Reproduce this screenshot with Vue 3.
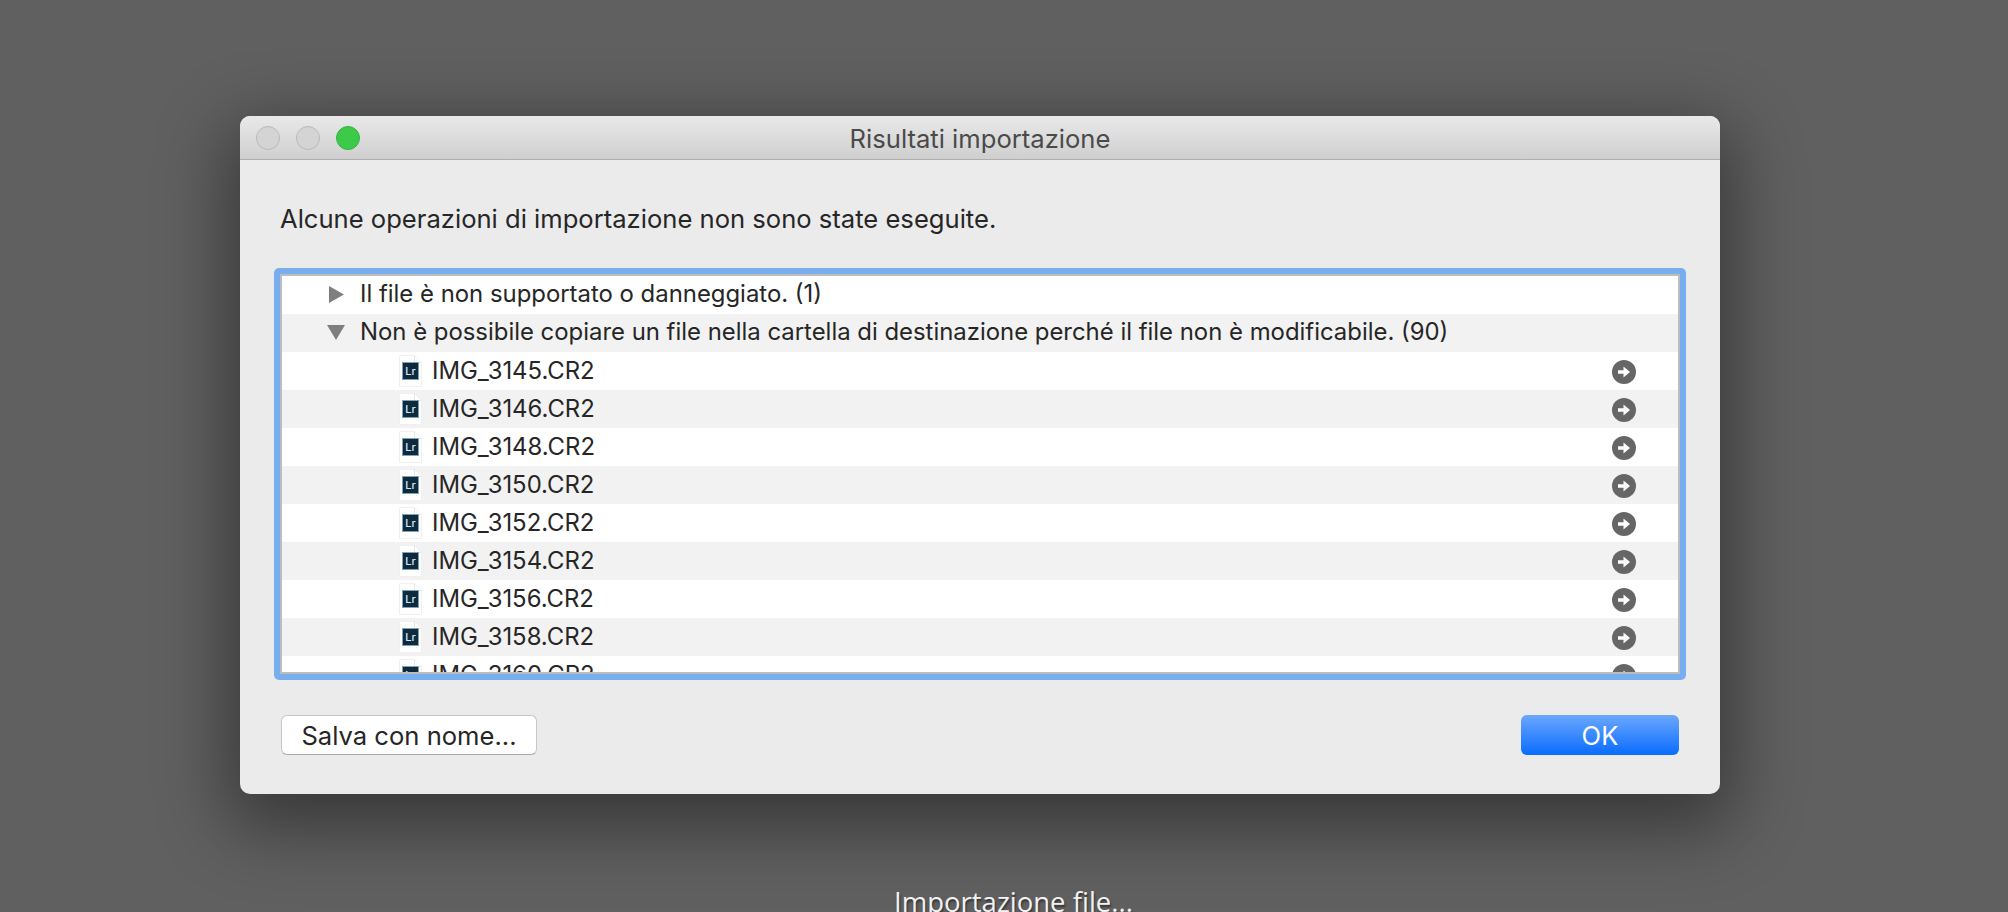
<script setup>
const files = ['3145','3146','3148','3150','3152','3154','3156','3158','3160'].map(n => `IMG_${n}.CR2`)
</script>

<template>
  <div class="stage">
    <section class="window">
      <header class="titlebar">
        <div class="lights">
          <span class="light"></span>
          <span class="light"></span>
          <span class="light green"></span>
        </div>
        <h1 class="title">Risultati importazione</h1>
      </header>
      <div class="content">
        <p class="message">Alcune operazioni di importazione non sono state eseguite.</p>
        <div class="ring">
          <div class="list">
            <div class="row">
              <svg class="tri right" width="15" height="17" viewBox="0 0 15 17"><path d="M0 0 15 8.500 0 17z" fill="#7f7f7f"/></svg>
              <span class="text">Il file è non supportato o danneggiato. (1)</span>
            </div>
            <div class="row alt">
              <svg class="tri down" width="18" height="15" viewBox="0 0 18 15"><path d="M0 0h18L9 15z" fill="#7f7f7f"/></svg>
              <span class="text">Non è possibile copiare un file nella cartella di destinazione perché il file non è modificabile. (90)</span>
            </div>
            <div v-for="(f, i) in files" :key="f" class="row file" :class="{ alt: i % 2 === 1 }">
              <span class="doc">
                <svg class="sheet" width="23" height="32" viewBox="0 0 23 32"><path d="M0.500 0.500h15l7 7v24H0.500z" fill="#fff" stroke="#f0f0f0"/><path d="M15.500 0.500v7h7" fill="none" stroke="#e4e4e4"/></svg>
                <span class="lr">Lr</span>
              </span>
              <span class="name">{{ f }}</span>
              <svg class="go" width="24" height="24" viewBox="0 0 24 24">
                <circle cx="12" cy="12" r="12" fill="#666"/>
                <path d="M6 10.300h5.500V6.500L18 12l-6.500 5.500v-3.800H6z" fill="#fff"/>
              </svg>
            </div>
          </div>
        </div>
        <div class="actions">
          <button class="btn">Salva con nome...</button>
          <button class="btn primary">OK</button>
        </div>
      </div>
    </section>
    <p class="status">Importazione file...</p>
  </div>
</template>

<style>
html, body { margin: 0; background: #606060; overflow: hidden; }
</style>

<style scoped>
.stage {
  width: 2008px;
  height: 912px;
  overflow: hidden;
  background: #606060;
  padding-top: 116px;
  box-sizing: border-box;
  font-family: Inter, "Liberation Sans", sans-serif;
}
.window {
  width: 1480px;
  height: 678px;
  margin-left: 240px;
  border-radius: 10px;
  background: #ebebeb;
  box-shadow: 0 22px 70px 12px rgba(0, 0, 0, 0.42);
  overflow: hidden;
  display: flex;
  flex-direction: column;
}
.titlebar {
  position: relative;
  height: 44px;
  box-sizing: border-box;
  flex: none;
  display: flex;
  align-items: center;
  justify-content: center;
  background: linear-gradient(#e9e9e9, #cfcfcf);
  border-bottom: 1px solid #adadad;
}
.lights {
  position: absolute;
  left: 16px;
  top: 10px;
  display: flex;
  gap: 16px;
}
.light {
  width: 24px;
  height: 24px;
  box-sizing: border-box;
  border-radius: 50%;
  background: #d4d4d4;
  border: 1px solid #b9b9b9;
}
.light.green { background: #3dc94a; border-color: #35b441; }
.title {
  margin: 2px 0 0;
  font-size: 25.6px;
  font-weight: 400;
  color: #4a4a4a;
}
.content {
  flex: 1;
  padding: 0 34px;
  display: flex;
  flex-direction: column;
}
.message {
  margin: 0;
  height: 108px;
  padding: 44px 0 0 6px;
  box-sizing: border-box;
  font-size: 25.6px;
  line-height: 30px;
  color: #262626;
}
.ring {
  width: 1412px;
  height: 412px;
  flex: none;
  box-sizing: border-box;
  border: 6px solid #78aeee;
  border-radius: 5px;
}
.list {
  height: 400px;
  box-sizing: border-box;
  border: 2px solid #bdbdbd;
  background: #fff;
  overflow: hidden;
}
.row {
  position: relative;
  height: 38px;
  display: flex;
  align-items: center;
  background: #fff;
  font-size: 23.9px;
  line-height: 34px;
  color: #262626;
  box-sizing: border-box;
}
.row.alt { background: #f2f2f2; }
.tri { position: absolute; }
.tri.right { left: 47px; top: 10px; }
.tri.down { left: 45px; top: 11px; }
.text { padding-left: 78px; white-space: nowrap; position: relative; top: -1px; }
.doc {
  position: relative;
  width: 23px;
  height: 32px;
  margin-left: 117px;
  flex: none;
}
.sheet { display: block; }
.lr {
  position: absolute;
  left: 4px;
  top: 8px;
  width: 15px;
  height: 16px;
  background: #0f2a3d;
  box-shadow: 0 0 0 1px #7fa3ba;
  color: #d3e9f7;
  font-size: 11px;
  font-weight: 500;
  line-height: 16px;
  text-align: center;
}
.name { margin-left: 10px; white-space: nowrap; }
.go { margin-left: auto; margin-right: 42px; flex: none; position: relative; top: 1px; }
.actions {
  display: flex;
  justify-content: space-between;
  padding: 35px 7px 0 7px;
}
.btn {
  height: 40px;
  box-sizing: border-box;
  border: 1px solid #c6c6c6;
  border-bottom-color: #a8a8a8;
  border-radius: 6px;
  background: #fff;
  color: #262626;
  font: 400 25.6px Inter, "Liberation Sans", sans-serif;
  width: 256px;
  padding: 0;
}
.btn.primary {
  width: 158px;
  border: none;
  background: linear-gradient(#6ba8fd, #0a6cff);
  color: #fff;
}
.status {
  margin: 0;
  padding-top: 89px;
  text-align: center;
  margin-left: 19px;
  font: 400 27.5px "Open Sans", sans-serif;
  line-height: 38px;
  color: #f2f2f2;
  text-shadow: 1px 2px 2px rgba(0, 0, 0, 0.5);
}
</style>
